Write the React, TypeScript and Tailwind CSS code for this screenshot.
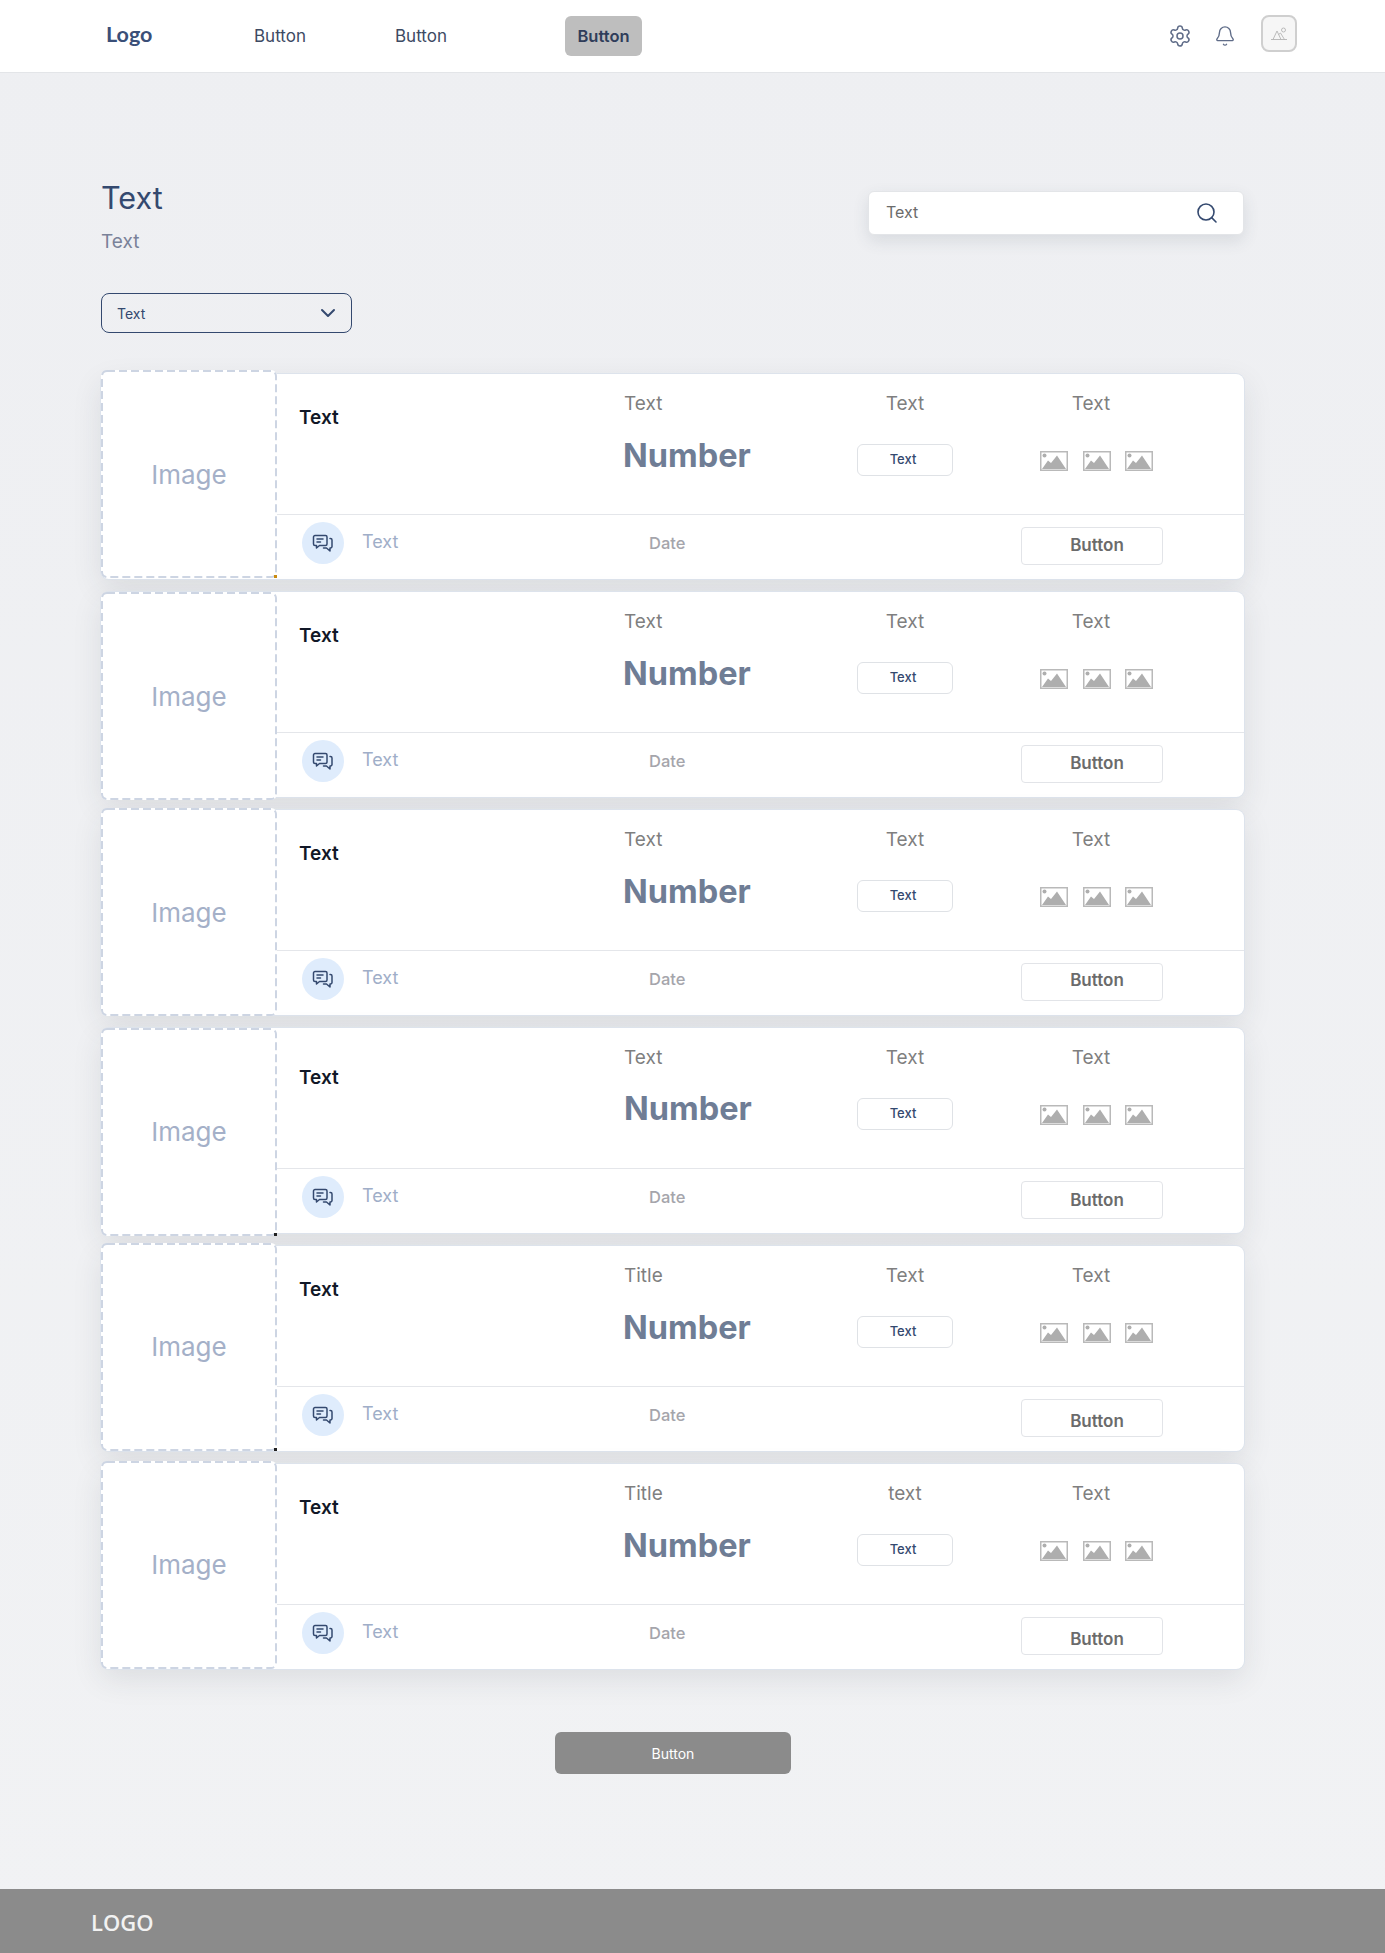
import { Bell, ChevronDown, Search, Settings } from 'lucide-react';

interface RowData {
  imageClass: string;
  imageTextClass: string;
  titleClass: string;
  numberClass: string;
  head: string;
  mid: string;
  buttonClass: string;
  corner?: string;
}

const rows: RowData[] = [
  { imageClass: '-mt-[4px]', imageTextClass: 'pb-[0px]', titleClass: 'pt-[32px]', numberClass: 'mt-[20px] -ml-[1px]', head: 'Text', mid: 'Text', buttonClass: 'pb-[1px]', corner: 'bg-[#c98a10]' },
  { imageClass: 'mt-[0px]', imageTextClass: 'pb-[0px]', titleClass: 'pt-[32px]', numberClass: 'mt-[20px] -ml-[1px]', head: 'Text', mid: 'Text', buttonClass: 'pb-[1px]' },
  { imageClass: '-mt-[2px]', imageTextClass: 'pb-[0px]', titleClass: 'pt-[32px]', numberClass: 'mt-[20px] -ml-[1px]', head: 'Text', mid: 'Text', buttonClass: 'pb-[3px]' },
  { imageClass: 'mt-[0px]', imageTextClass: 'pb-[2px]', titleClass: 'pt-[38px]', numberClass: 'mt-[19px] ml-[0px]', head: 'Text', mid: 'Text', buttonClass: 'pt-[1px]', corner: 'bg-[#222222]' },
  { imageClass: '-mt-[3px]', imageTextClass: 'pb-[2px]', titleClass: 'pt-[32px]', numberClass: 'mt-[20px] -ml-[1px]', head: 'Title', mid: 'Text', buttonClass: 'pt-[7px]', corner: 'bg-[#222222]' },
  { imageClass: '-mt-[3px]', imageTextClass: 'pb-[2px]', titleClass: 'pt-[32px]', numberClass: 'mt-[20px] -ml-[1px]', head: 'Title', mid: 'text', buttonClass: 'pt-[7px]' },
];

function ChatIcon() {
  return (
    <svg width="22" height="19" viewBox="0 0 22 19" fill="none" stroke="#34496f" strokeWidth="1.5" strokeLinejoin="round" strokeLinecap="round">
      <path d="M3 1.5h10.5a1.5 1.5 0 0 1 1.5 1.5v7a1.5 1.5 0 0 1-1.5 1.5H7.5L4.5 14v-2.5H3A1.5 1.5 0 0 1 1.500 10V3A1.500 1.500 0 0 1 3 1.500Z" />
      <path d="M5 5h6M5 8h3.500" />
      <path d="M18 4.500h.5a1.500 1.500 0 0 1 1.500 1.500v6.500a1.500 1.500 0 0 1-1.500 1.500H18v3l-3.500-3h-3" />
    </svg>
  );
}

function ImageIcon() {
  return (
    <svg width="28" height="20" viewBox="0 0 28 20">
      <rect x="0.75" y="0.75" width="26.500" height="18.500" fill="#ffffff" stroke="#b9b9b9" strokeWidth="1.5" />
      <circle cx="4.500" cy="4.500" r="2" fill="#aeaeae" />
      <path d="M2 18 L8 9.500 L11 12 L17 4.500 L26 18 Z" fill="#aeaeae" />
    </svg>
  );
}

function Card({ row }: { row: RowData }) {
  return (
    <div className="relative flex h-[205px] items-start rounded-lg bg-white shadow-[0_0_0_1px_#dde3ec,0_10px_30px_rgba(40,45,60,0.1)]">
      <div className={`relative z-10 flex h-[208px] w-[176px] shrink-0 items-center justify-center rounded-md bg-white ${row.imageClass}`}>
        <svg className="absolute inset-0" width="176" height="208" fill="none">
          <rect x="1" y="1" width="174" height="206" rx="5" stroke="#cdd5e3" strokeWidth="2" strokeDasharray="8 4" />
        </svg>
        <span className={`text-[26px] text-[#a4b0c8] ${row.imageTextClass}`}>Image</span>
        {row.corner && <span className={`absolute right-0 bottom-0 h-[3px] w-[3px] ${row.corner}`}></span>}
      </div>
      <div className="flex h-[205px] flex-1 flex-col">
        <div className="flex h-[140px]">
          <div className={`w-[347px] pl-[22px] text-[19px] leading-[24px] font-semibold text-[#111827] ${row.titleClass}`}>Text</div>
          <div className="flex w-[200px] flex-col pt-[18px]">
            <span className="text-[19px] leading-[24px] text-[#7f7f7f]">{row.head}</span>
            <span className={`text-[32.5px] leading-[40px] font-bold text-[#6f7d95] ${row.numberClass}`}>Number</span>
          </div>
          <div className="flex w-[162px] flex-col items-center pt-[18px]">
            <span className="text-[19px] leading-[24px] text-[#7f7f7f]">{row.mid}</span>
            <span className="mt-[28px] flex h-[32px] w-[96px] items-center justify-center rounded-md border border-[#dfe2e6] pr-[4px] text-[13px] font-medium text-[#34496f]">Text</span>
          </div>
          <div className="flex w-[210px] flex-col items-center pt-[18px]">
            <span className="text-[19px] leading-[24px] text-[#7f7f7f]">Text</span>
            <div className="mt-[35px] ml-[11px] flex gap-[14.500px]">
              <ImageIcon />
              <ImageIcon />
              <ImageIcon />
            </div>
          </div>
        </div>
        <div className="flex flex-1 items-start border-t border-[#e4e6ea] pt-[7px]">
          <div className="ml-[25px] flex h-[42px] w-[42px] shrink-0 items-center justify-center rounded-full bg-[#dfecfc]">
            <ChatIcon />
          </div>
          <span className="ml-[18px] w-[287px] text-[18px] leading-[40px] text-[#a0aec8]">Text</span>
          <span className="w-[372px] text-[16.500px] leading-[42px] font-medium text-[#a5a5ab]">Date</span>
          <div className={`mt-[5px] flex h-[38px] w-[142px] items-center justify-center rounded border border-[#e2e4e8] pl-[10px] text-[17px] font-semibold text-[#6b6b6b] ${row.buttonClass}`}>Button</div>
        </div>
      </div>
    </div>
  );
}

export default function App() {
  return (
    <div className="flex min-h-[1953px] flex-col bg-linear-to-b from-[#eeeff2] to-[#f1f2f4] font-['Inter',sans-serif] antialiased">
      <header className="flex h-[73px] items-center border-b border-[#e3e5e8] bg-white pr-[88px]">
        <span className="ml-[106px] w-[148px] pb-[4px] font-['Lato',sans-serif] text-[21.500px] font-bold text-[#3a4f78]">Logo</span>
        <span className="w-[141px] pt-[2px] text-[17px] text-[#3d4a63]">Button</span>
        <span className="w-[170px] pt-[2px] text-[17px] text-[#3d4a63]">Button</span>
        <span className="flex h-[40px] w-[77px] items-center justify-center rounded-md bg-[#bebebe] text-[16.500px] font-semibold text-[#2f3d5a]">Button</span>
        <div className="ml-auto flex items-center">
          <Settings size={24} strokeWidth={1.5} className="text-[#5f6c88]" />
          <Bell size={22} strokeWidth={1.5} className="ml-[22px] text-[#5f6c88]" />
          <div className="ml-[25px] mb-[5px] flex h-[37px] w-[36px] items-center justify-center rounded-lg border-2 border-[#cfcfcf] bg-[#f6f6f6]">
            <svg width="18" height="14" viewBox="0 0 18 14" fill="none" stroke="#b4b4b4" strokeWidth="0.9">
              <path d="M1 12.500h16M3 12.500 L7 4 L11 12.500M8.500 7.500 L10.500 6 L14.500 12.500" />
              <circle cx="13.500" cy="3" r="2" />
            </svg>
          </div>
        </div>
      </header>

      <main className="ml-[101px] flex w-[1143px] flex-1 flex-col">
        <div className="flex items-start justify-between pt-[106px]">
          <div>
            <h1 className="text-[30.500px] leading-[38px] text-[#34496f]">Text</h1>
            <p className="mt-[13px] text-[19px] leading-[24px] text-[#7a8299]">Text</p>
          </div>
          <div className="mt-[12px] flex h-[44px] w-[376px] items-center justify-between rounded-md border border-[#e3e5e8] bg-white pr-[24px] pl-[17px] shadow-[0_6px_16px_rgba(60,70,90,0.12)]">
            <span className="pb-[2px] text-[16px] text-[#6b6b6b]">Text</span>
            <Search size={24} strokeWidth={1.6} className="text-[#34496f]" />
          </div>
        </div>

        <div className="mt-[39px] flex h-[40px] w-[251px] items-center justify-between rounded-lg border border-[#34496f] pr-[11px] pl-[15px]">
          <span className="text-[14px] text-[#34496f]">Text</span>
          <ChevronDown size={24} strokeWidth={2} className="text-[#34496f]" />
        </div>

        <div className="mt-[41px] flex flex-col gap-[13px]">
          {rows.map((row, i) => (
            <Card key={i} row={row} />
          ))}
        </div>

        <div className="mt-[63px] ml-[454px] flex h-[42px] w-[236px] items-center justify-center rounded-md bg-[#8b8b8b] text-[14px] text-white">Button</div>
      </main>

      <footer className="flex h-[64px] items-center bg-[#8b8b8b] pl-[91px]">
        <span className="pt-[3px] font-['Open_Sans',sans-serif] text-[22px] font-semibold text-[#f2f2f2]">LOGO</span>
      </footer>
    </div>
  );
}
